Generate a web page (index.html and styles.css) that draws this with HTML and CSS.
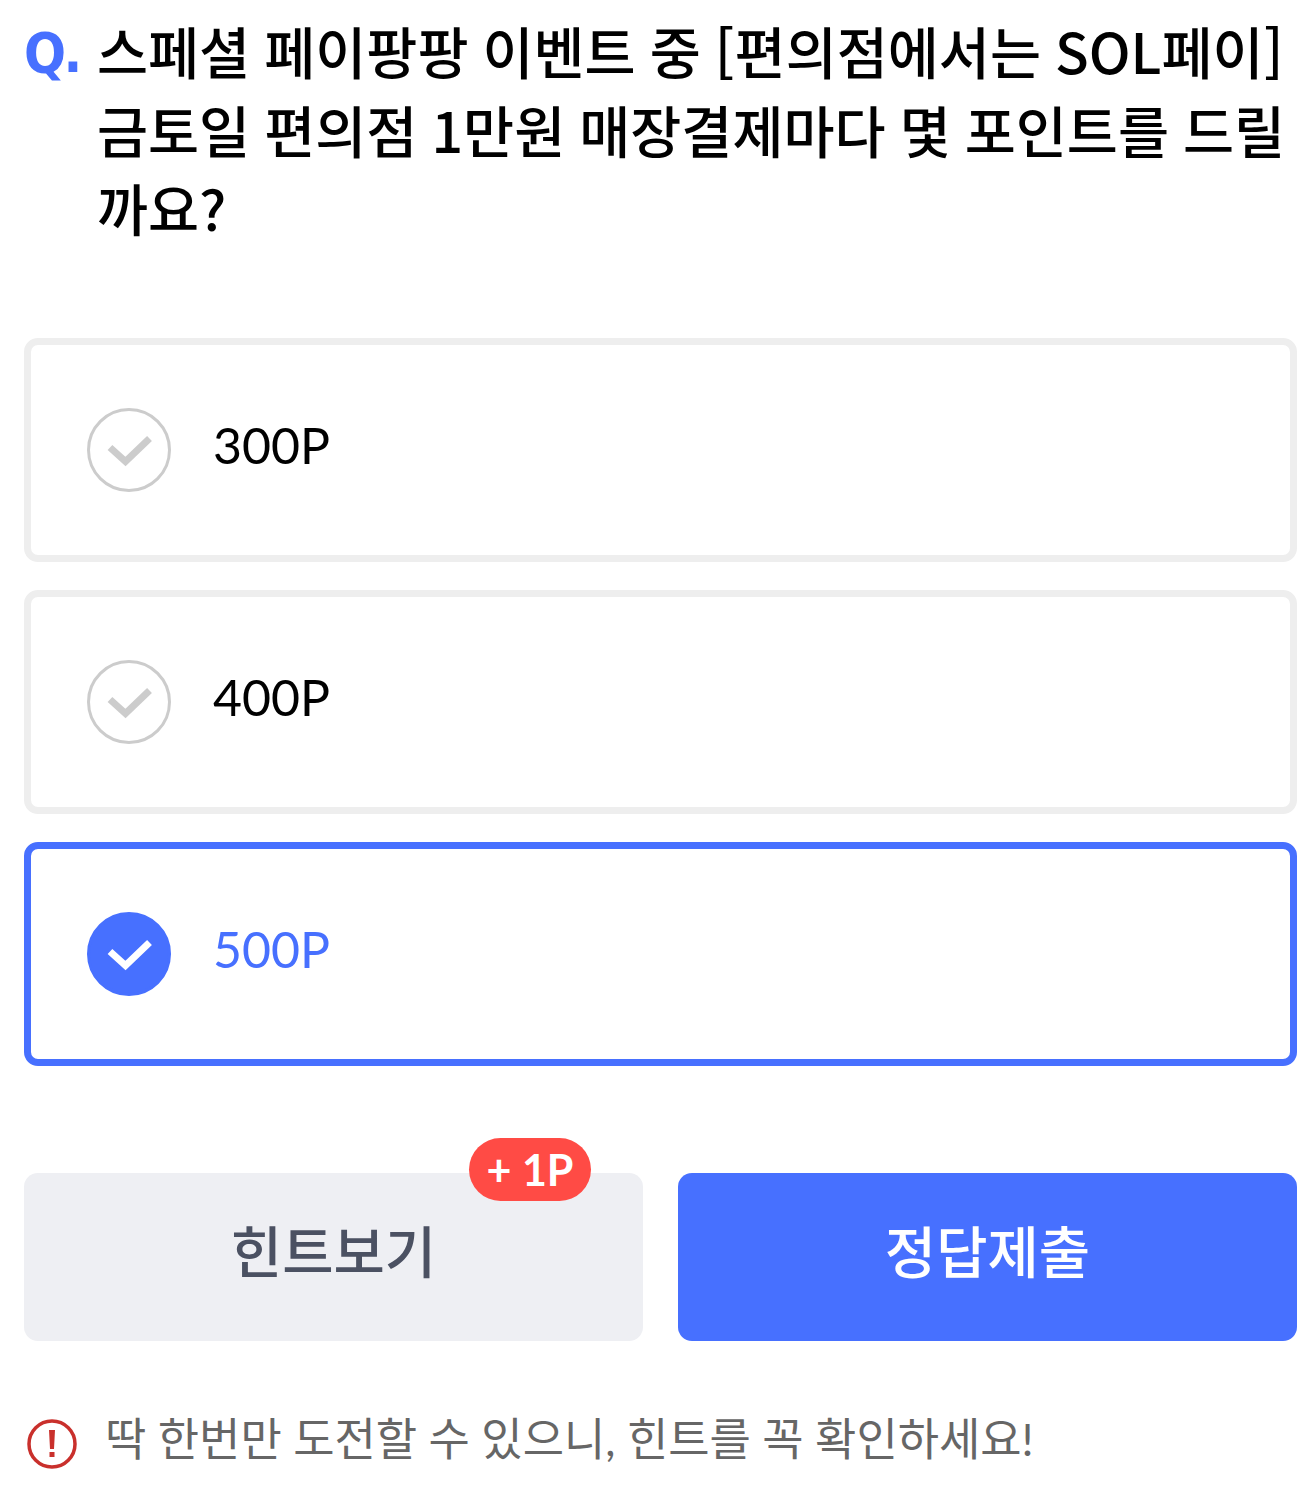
FILE: index.html
```html
<!DOCTYPE html>
<html lang="ko">
<head>
  <meta charset="UTF-8">
  <meta name="viewport" content="width=device-width, initial-scale=1.0">
  <title>퀴즈</title>
  <link rel="stylesheet" href="styles.css">
</head>
<body>
  <main class="quiz">
    <div class="question">
      <span class="question-mark">Q.</span>
      <h1>
        <span>스페셜 페이팡팡 이벤트 중 [편의점에서는 SOL페이]</span>
        <span>금토일 편의점 1만원 매장결제마다 몇 포인트를 드릴</span>
        <span>까요?</span>
      </h1>
    </div>

    <div class="options">
      <div class="option">
        <svg class="check" viewBox="0 0 84 84"><circle cx="42" cy="42" r="40.5"/><path d="M23 39.500l15.500 14 24-23"/></svg>
        <span>300P</span>
      </div>
      <div class="option">
        <svg class="check" viewBox="0 0 84 84"><circle cx="42" cy="42" r="40.5"/><path d="M23 39.500l15.500 14 24-23"/></svg>
        <span>400P</span>
      </div>
      <div class="option selected">
        <svg class="check" viewBox="0 0 84 84"><circle cx="42" cy="42" r="40.5"/><path d="M23 39.500l15.500 14 24-23"/></svg>
        <span>500P</span>
      </div>
    </div>

    <div class="buttons">
      <button class="btn hint" type="button"><span>힌트보기</span><span class="badge">+ 1P</span></button>
      <button class="btn submit" type="button"><span>정답제출</span></button>
    </div>

    <div class="notice">
      <svg class="alert" viewBox="0 0 50 50"><circle cx="25" cy="25" r="23"/><path d="M22 11h6l-1 19h-4zM22.500 33h5v5h-5z"/></svg>
      <span>딱 한번만 도전할 수 있으니, 힌트를 꼭 확인하세요!</span>
    </div>
  </main>
</body>
</html>
```
FILE: styles.css
```css
* {
  box-sizing: border-box;
}
body {
  margin: 0;
  background-color: #fff;
  color: #000;
  font-family: Lato, "Noto Sans CJK KR", sans-serif;
}
.quiz {
  padding: 11px 17px 0 24px;
}
.question {
  display: flex;
  height: 327px;
}
.question-mark {
  width: 73px;
  flex-shrink: 0;
  color: #4770ff;
  font-family: "DejaVu Sans Condensed", "DejaVu Sans", sans-serif;
  font-stretch: condensed;
  font-size: 55px;
  font-weight: 700;
  letter-spacing: -2.5px;
  line-height: 85px;
}
h1 {
  margin: 0;
  font-family: "Noto Sans CJK KR", sans-serif;
  font-size: 55.5px;
  font-weight: 500;
  line-height: 78.5px;
  word-spacing: -1.5px;
}
h1 span {
  display: block;
  white-space: nowrap;
}
.options {
  display: flex;
  flex-direction: column;
  gap: 28px;
}
.option {
  display: flex;
  align-items: center;
  gap: 42px;
  height: 224px;
  padding-left: 56px;
  border: 7px solid #eee;
  border-radius: 14px;
  font-size: 50px;
  line-height: 60px;
}
.option span {
  margin-top: -10px;
}
.check {
  width: 84px;
  height: 84px;
  fill: none;
  stroke: #ccc;
  stroke-width: 3;
}
.check path {
  stroke-width: 7;
}
.selected {
  border-color: #4770ff;
  color: #4770ff;
}
.selected .check circle {
  fill: #4770ff;
  stroke: #4770ff;
}
.selected .check path {
  stroke: #fff;
}
.buttons {
  display: flex;
  gap: 35px;
  margin-top: 107px;
}
.btn {
  position: relative;
  flex: 1;
  height: 168px;
  padding: 0 0 18px;
  border: 0;
  border-radius: 14px;
  font-family: inherit;
  font-size: 55.8px;
  font-weight: 500;
}
.hint {
  background-color: #eeeff3;
  color: #4b5162;
}
.submit {
  background-color: #4770ff;
  color: #fff;
}
.badge {
  position: absolute;
  top: -35px;
  right: 52px;
  width: 122px;
  height: 63px;
  border-radius: 32px;
  background-color: #ff4b45;
  color: #fff;
  font-size: 43px;
  font-weight: 700;
  line-height: 64px;
}
.notice {
  display: flex;
  align-items: center;
  gap: 28px;
  margin-top: 65px;
  padding-left: 3px;
  color: #666;
  font-size: 44.9px;
  line-height: 66px;
}
.alert {
  width: 50px;
  height: 50px;
  margin-top: 9px;
  fill: none;
  stroke: #c9302c;
  stroke-width: 3.5;
}
.alert path {
  fill: #c9302c;
  stroke: none;
}
```
